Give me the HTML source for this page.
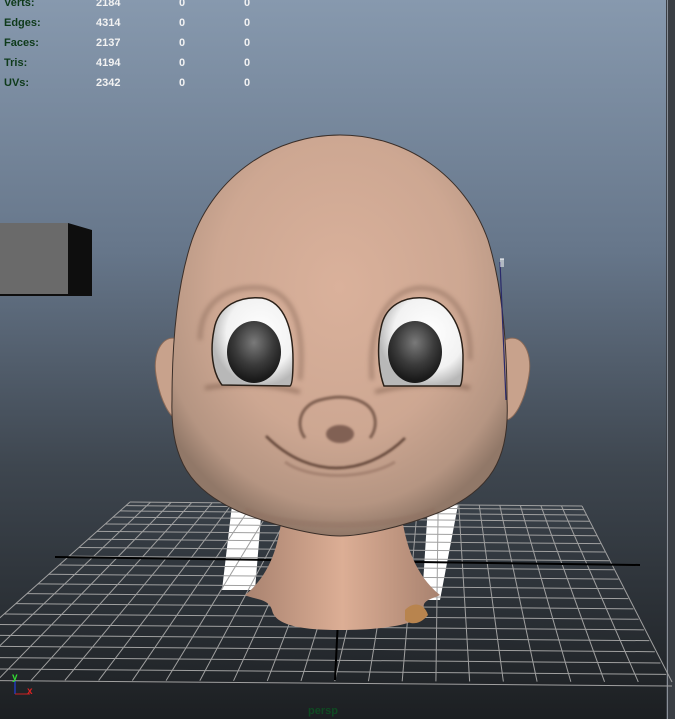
<!DOCTYPE html>
<html><head><meta charset="utf-8"><style>
html,body{margin:0;padding:0;width:675px;height:719px;overflow:hidden;background:#222}
.hud{position:absolute;font-family:"Liberation Sans",sans-serif;font-weight:bold;font-size:11px;}
.l{color:#0e3a1a;left:4px}
.v{color:#f2f2f2}
</style></head><body>
<svg width="675" height="719" style="position:absolute;left:0;top:0" xmlns="http://www.w3.org/2000/svg">
<defs>
<linearGradient id="bg" x1="0" y1="0" x2="0" y2="1">
<stop offset="0" stop-color="#8799ae"/>
<stop offset="0.35" stop-color="#66768a"/>
<stop offset="0.65" stop-color="#3e464f"/>
<stop offset="1" stop-color="#1c1f22"/>
</linearGradient>
<radialGradient id="skin" cx="0.5" cy="0.38" r="0.62">
<stop offset="0" stop-color="#dab19b"/>
<stop offset="0.6" stop-color="#cda792"/>
<stop offset="0.88" stop-color="#b59582"/>
<stop offset="1" stop-color="#917868"/>
</radialGradient>
<linearGradient id="neck" x1="0" y1="0" x2="1" y2="0">
<stop offset="0" stop-color="#a8826f"/>
<stop offset="0.5" stop-color="#dcae95"/>
<stop offset="1" stop-color="#a8826f"/>
</linearGradient>
<radialGradient id="white" cx="0.6" cy="0.4" r="0.6">
<stop offset="0" stop-color="#ffffff"/>
<stop offset="0.7" stop-color="#f2f2f2"/>
<stop offset="1" stop-color="#b8b8b8"/>
</radialGradient>
<radialGradient id="pupil" cx="0.5" cy="0.35" r="0.6">
<stop offset="0" stop-color="#7a7a7a"/>
<stop offset="0.6" stop-color="#3a3a3a"/>
<stop offset="1" stop-color="#1a1a1a"/>
</radialGradient>
<filter id="b2"><feGaussianBlur stdDeviation="2.5"/></filter>
<filter id="b1"><feGaussianBlur stdDeviation="1"/></filter>
</defs>
<rect width="675" height="719" fill="url(#bg)"/>
<rect x="666" y="0" width="9" height="719" fill="#3a3e44"/>
<rect x="667" y="0" width="1" height="719" fill="#8a9099"/>
<rect x="0" y="223" width="68" height="72" fill="#6a6a6a"/>
<polygon points="68,223 92,230 92,295 68,295" fill="#0e0e0e"/>
<rect x="0" y="294" width="92" height="2" fill="#0e0e0e"/>
<polygon points="232,505 262,505 255,590 222,590" fill="#fff"/>
<polygon points="428,505 458,505 440,600 422,600" fill="#fff"/>
<g stroke="#a0a0a0" stroke-width="1" fill="none" id="grid"></g>
<line x1="55" y1="557" x2="640" y2="565" stroke="#000" stroke-width="2"/>
<line x1="338" y1="620" x2="335" y2="680" stroke="#000" stroke-width="2"/>
<path d="M180,340 C165,332 152,350 156,375 C160,400 170,420 180,420 Z" fill="#c8a28c" stroke="#8a6a58" stroke-width="1"/>
<path d="M505,340 C520,332 533,350 529,375 C525,400 515,420 505,420 Z" fill="#c8a28c" stroke="#8a6a58" stroke-width="1"/>
<path d="M283,505 L400,505 C405,545 415,575 440,595 C430,600 420,600 425,612 C420,625 380,630 340,630 C300,630 275,625 272,610 C268,598 255,600 245,595 C270,575 280,545 283,505 Z" fill="url(#neck)"/>
<path d="M405,610 C415,600 425,605 428,615 C420,625 410,625 405,620 Z" fill="#b8844e"/>
<path d="M340,135 C405,135 465,175 488,240 C502,285 507,340 507,400 C510,460 490,490 440,512 C400,528 360,536 340,536 C320,536 280,528 240,512 C190,490 170,460 172,400 C172,340 177,285 192,240 C215,175 275,135 340,135 Z" fill="url(#skin)" stroke="#3a2e28" stroke-width="1"/>
<line x1="500" y1="262" x2="506" y2="400" stroke="#2a2a6a" stroke-width="1.2"/>
<path d="M500,259 h4 M501,259 v8 M503,259 v8" stroke="#fff" stroke-width="1"/>
<g filter="url(#b2)" opacity="0.6">
<path d="M205,388 C240,382 270,384 300,392" stroke="#7a5a4a" stroke-width="4" fill="none"/>
<path d="M375,392 C405,384 440,382 470,388" stroke="#7a5a4a" stroke-width="4" fill="none"/>
<path d="M200,340 C200,300 230,285 262,288 C295,292 305,330 300,380" stroke="#8a6a5a" stroke-width="4" fill="none"/>
<path d="M372,380 C368,330 385,290 420,288 C455,288 472,320 470,360" stroke="#8a6a5a" stroke-width="4" fill="none"/>
</g>
<path d="M214,330 C218,305 240,296 262,298 C285,302 293,330 293,360 C293,375 292,385 290,386 L222,385 C212,372 210,350 214,330 Z" fill="url(#white)" stroke="#2a2018" stroke-width="1.5"/>
<ellipse cx="254" cy="352" rx="27" ry="31" fill="url(#pupil)"/>
<path d="M381,328 C385,305 405,296 425,298 C448,301 462,325 463,355 C463,372 462,384 460,386 L384,386 C378,370 377,345 381,328 Z" fill="url(#white)" stroke="#2a2018" stroke-width="1.5"/>
<ellipse cx="415" cy="352" rx="27" ry="31" fill="url(#pupil)"/>
<g filter="url(#b1)">
<path d="M305,438 C295,425 300,405 320,400 C335,396 350,396 362,402 C378,410 378,428 370,438" stroke="#7e5e50" stroke-width="3" fill="none"/>
<ellipse cx="340" cy="434" rx="14" ry="9" fill="#6e5044" opacity="0.8"/>
<path d="M266,436 C290,460 315,468 336,468 C360,468 385,458 405,438" stroke="#5e4236" stroke-width="2.5" fill="none"/>
<path d="M285,462 C310,480 365,480 395,462" stroke="#9a7866" stroke-width="3" fill="none" opacity="0.7"/>
<path d="M245,510 C290,530 390,530 435,510" stroke="#8a6a5a" stroke-width="6" fill="none" opacity="0.3"/>
</g>
<line x1="15" y1="694" x2="15" y2="681" stroke="#2244ff" stroke-width="1"/>
<line x1="15" y1="694" x2="30" y2="694" stroke="#cc2222" stroke-width="1"/>
<text x="12" y="680" font-family="Liberation Sans,sans-serif" font-size="10" font-weight="bold" fill="#33dd33">y</text>
<text x="27" y="694" font-family="Liberation Sans,sans-serif" font-size="10" font-weight="bold" fill="#dd2222">x</text>
<text x="308" y="714" font-family="Liberation Sans,sans-serif" font-size="11" font-weight="bold" fill="#0f4a22">persp</text>
</svg>
<div class="hud l" style="top:-3px">Verts:</div><div class="hud v" style="top:-3px;left:96px">2184</div><div class="hud v" style="top:-3px;left:179px">0</div><div class="hud v" style="top:-3px;left:244px">0</div>
<div class="hud l" style="top:17px">Edges:</div><div class="hud v" style="top:17px;left:96px">4314</div><div class="hud v" style="top:17px;left:179px">0</div><div class="hud v" style="top:17px;left:244px">0</div>
<div class="hud l" style="top:37px">Faces:</div><div class="hud v" style="top:37px;left:96px">2137</div><div class="hud v" style="top:37px;left:179px">0</div><div class="hud v" style="top:37px;left:244px">0</div>
<div class="hud l" style="top:57px">Tris:</div><div class="hud v" style="top:57px;left:96px">4194</div><div class="hud v" style="top:57px;left:179px">0</div><div class="hud v" style="top:57px;left:244px">0</div>
<div class="hud l" style="top:77px">UVs:</div><div class="hud v" style="top:77px;left:96px">2342</div><div class="hud v" style="top:77px;left:179px">0</div><div class="hud v" style="top:77px;left:244px">0</div>
<script>
(function(){
var g=document.getElementById('grid');var ns='http://www.w3.org/2000/svg';
function ln(a,b,c,d){var l=document.createElementNS(ns,'line');l.setAttribute('x1',a);l.setAttribute('y1',b);l.setAttribute('x2',c);l.setAttribute('y2',d);g.appendChild(l);}
var N=22;
for(var i=0;i<=N;i++){var t=i/N;
 var bx=130+(582-130)*t, fx=-70+(672+70)*t; ln(bx,502+t*4,fx,680+t*2);}
var M=20;
for(var j=0;j<=M;j++){var s=j/M; var p=Math.pow(s,1.3);
 var y1=502+(680-502)*p; var xl=130+(-70-130)*p; var xr=582+(672-582)*p; ln(xl,y1,xr,y1+4+(2*p));}
})();
</script>
</body></html>
